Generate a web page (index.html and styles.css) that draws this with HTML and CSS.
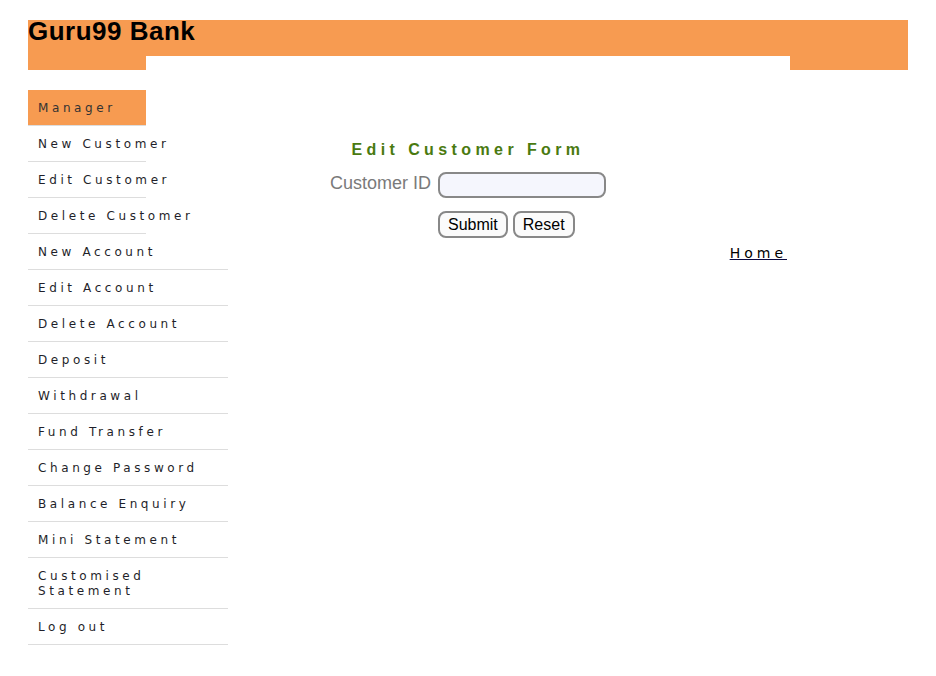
FILE: index.html
```html
<!DOCTYPE html>
<html lang="en">
<head>
<meta charset="utf-8">
<title>Guru99 Bank - Edit Customer</title>
<link rel="stylesheet" href="styles.css">
</head>
<body>
<div class="page">
  <header class="banner">
    <h2 class="brand">Guru99 Bank</h2>
    <div class="banner-foot">
      <span class="foot-side"></span>
      <span class="foot-mid"></span>
      <span class="foot-side"></span>
    </div>
  </header>
  <div class="layout">
    <nav class="sidebar">
      <ul class="menu">
        <li class="menu-item narrow active"><a href="#">Manager</a></li>
        <li class="menu-item narrow"><a href="#">New Customer</a></li>
        <li class="menu-item narrow"><a href="#">Edit Customer</a></li>
        <li class="menu-item narrow"><a href="#">Delete Customer</a></li>
        <li class="menu-item wide"><a href="#">New Account</a></li>
        <li class="menu-item wide"><a href="#">Edit Account</a></li>
        <li class="menu-item wide"><a href="#">Delete Account</a></li>
        <li class="menu-item wide"><a href="#">Deposit</a></li>
        <li class="menu-item wide"><a href="#">Withdrawal</a></li>
        <li class="menu-item wide"><a href="#">Fund Transfer</a></li>
        <li class="menu-item wide"><a href="#">Change Password</a></li>
        <li class="menu-item wide"><a href="#">Balance Enquiry</a></li>
        <li class="menu-item wide"><a href="#">Mini Statement</a></li>
        <li class="menu-item wide"><a href="#">Customised Statement</a></li>
        <li class="menu-item wide"><a href="#">Log out</a></li>
      </ul>
    </nav>
    <main class="content">
      <p class="form-title">Edit Customer Form</p>
      <form class="form-grid">
        <label class="field-label" for="cusid">Customer ID</label>
        <input class="field-input" id="cusid" type="text" name="cusid">
        <span class="grid-spacer"></span>
        <div class="buttons">
          <button class="btn" type="button">Submit</button>
          <button class="btn" type="reset">Reset</button>
        </div>
      </form>
      <div class="home-row"><a class="home-link" href="#">Home</a></div>
    </main>
  </div>
</div>
</body>
</html>
```
FILE: styles.css
```css
* { box-sizing: border-box; }

body {
  margin: 0;
  background: #ffffff;
  font-family: "Liberation Sans", Arial, sans-serif;
}

.page {
  width: 880px;
  margin: 20px auto 0;
}

.banner {
  background: #f79b51;
}

.brand {
  margin: 0;
  height: 36px;
  font-family: "Liberation Sans", Arial, sans-serif;
  font-size: 26px;
  font-weight: bold;
  line-height: 22px;
  letter-spacing: 0.5px;
  color: #000;
}

.banner-foot {
  display: flex;
  height: 14px;
}

.foot-side {
  width: 118px;
  background: #f79b51;
}

.foot-mid {
  flex: 1;
  background: #ffffff;
}

.layout {
  display: grid;
  grid-template-columns: 118px 644px 118px;
  margin-top: 20px;
}

.menu {
  list-style: none;
  margin: 0;
  padding: 0;
}

.menu-item a {
  display: block;
  padding: 11px 10px 9px;
  font-family: "DejaVu Sans", Verdana, sans-serif;
  font-size: 12px;
  line-height: 15px;
  letter-spacing: 0.3em;
  color: #1f1f2a;
  text-decoration: none;
  border-bottom: 1px solid #dddddd;
}

.menu-item.narrow a {
  width: 118px;
  white-space: nowrap;
}

.menu-item.wide a {
  width: 200px;
}

.menu-item.active a {
  background: #f79b51;
  color: #333333;
}

.content {
  display: flex;
  flex-direction: column;
  align-items: center;
}

.form-title {
  margin: 51px 0 0;
  font-family: "Liberation Sans", Arial, sans-serif;
  font-size: 16px;
  font-weight: bold;
  line-height: 18px;
  letter-spacing: 4.4px;
  color: #4a7a10;
}

.form-grid {
  display: grid;
  grid-template-columns: auto auto;
  column-gap: 7px;
  row-gap: 13px;
  margin-top: 13px;
}

.field-label {
  font-family: "Liberation Sans", Arial, sans-serif;
  font-size: 18px;
  line-height: 18px;
  color: #7a7a7a;
  padding-top: 2px;
}

.field-input {
  width: 168px;
  height: 26px;
  border: 2px solid #888888;
  border-radius: 8px;
  background: #f5f6fd;
  padding: 0 6px;
  font-size: 15px;
  outline: none;
}

.buttons {
  display: flex;
  gap: 5px;
}

.btn {
  height: 27px;
  padding: 3px 8px;
  font-family: "Liberation Sans", Arial, sans-serif;
  font-size: 16px;
  line-height: 17px;
  color: #000;
  background: #fbfbfb;
  border: 2px solid #888888;
  border-radius: 8px;
}

.home-row {
  align-self: stretch;
  display: flex;
  justify-content: flex-end;
  margin-top: 7px;
  padding-right: 3px;
}

.home-link {
  font-family: "DejaVu Sans", Verdana, sans-serif;
  font-size: 14px;
  line-height: 16px;
  letter-spacing: 4px;
  color: #000;
  text-decoration: underline;
  text-decoration-color: #0a0a40;
}
```
